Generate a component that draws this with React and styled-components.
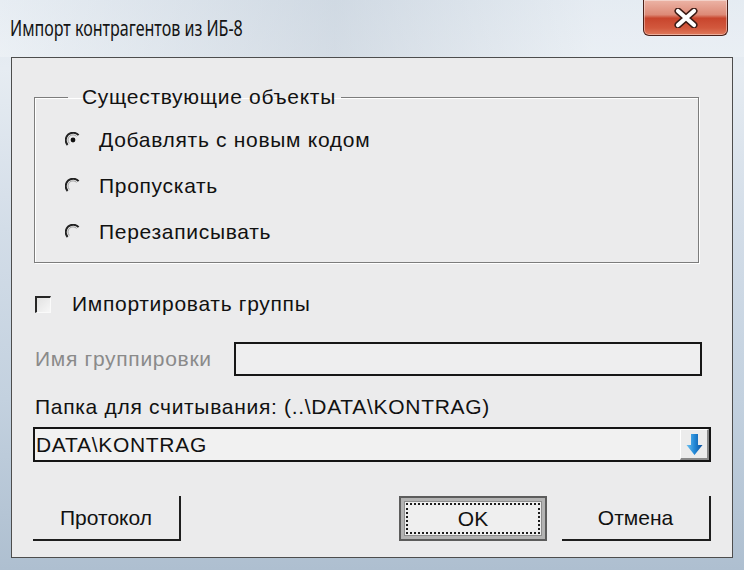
import React from 'react';
import styled, { createGlobalStyle } from 'styled-components';

const GlobalStyle = createGlobalStyle`
  html, body {
    margin: 0;
    padding: 0;
    background: #c5d3e1;
  }
  body {
    width: 744px;
    height: 570px;
    overflow: hidden;
  }
`;

const Window = styled.div`
  width: 744px;
  height: 570px;
  display: flex;
  flex-direction: column;
  background: linear-gradient(180deg, #dfe7ef 0%, #e6ecf2 12%, #d3dde8 40%, #c3d1df 70%, #aebfd0 100%);
  font-family: "Liberation Sans", Arial, sans-serif;
  color: #111;
`;

const TitleBar = styled.div`
  height: 57px;
  flex: none;
  display: flex;
  align-items: flex-start;
  justify-content: space-between;
  padding: 0 16px 0 10px;
  box-sizing: border-box;
  background: linear-gradient(90deg, rgba(255, 255, 255, 0.25) 0%, rgba(180, 192, 205, 0.35) 45%, rgba(255, 255, 255, 0.2) 80%);
`;

const Title = styled.div`
  margin-top: 12px;
  font-family: "Noto Sans", "Open Sans", sans-serif;
  font-size: 22px;
  line-height: 30px;
  color: #141414;
  transform: scaleX(0.73);
  transform-origin: left center;
  white-space: nowrap;
`;

const CloseButton = styled.div`
  width: 85px;
  height: 36px;
  box-sizing: border-box;
  border: 1px solid #4b2019;
  border-top: none;
  border-radius: 0 0 6px 6px;
  background: linear-gradient(180deg, #ecb4a6 0%, #dd8a77 42%, #c8452d 52%, #d2583d 80%, #e07a5c 100%);
  box-shadow: inset 0 0 0 1px rgba(255, 255, 255, 0.4);
  display: flex;
  align-items: center;
  justify-content: center;
`;

const Client = styled.div`
  flex: 1;
  margin: 0 11px;
  box-sizing: border-box;
  border: 1px solid #4d4d4d;
  background: #ebebec;
  padding: 27px 21px 0 21px;
  display: flex;
  flex-direction: column;
  font-size: 21px;
  letter-spacing: 0.7px;
`;

const BottomFrame = styled.div`
  height: 12px;
  flex: none;
`;

const GroupBox = styled.fieldset`
  margin: 0 12px 0 1px;
  padding: 0 0 7px 0;
  min-width: 0;
  border: 1px solid #7c7c7c;
  box-shadow: inset 1px 1px 0 #fff, 1px 1px 0 #fff;
`;

const Legend = styled.legend`
  margin-left: 33px;
  padding: 0 5px 0 14px;
  line-height: 24px;
`;

const RadioList = styled.div`
  padding: 8px 0 0 30px;
  display: flex;
  flex-direction: column;
`;

const RadioRow = styled.label`
  height: 46px;
  display: flex;
  align-items: center;
  gap: 18px;
`;

const CheckRow = styled.label`
  margin-top: 29px;
  height: 24px;
  padding-left: 2px;
  display: flex;
  align-items: center;
  gap: 21px;
`;

const CheckBox = styled.span`
  width: 16px;
  height: 17px;
  box-sizing: border-box;
  border-top: 2px solid #262626;
  border-left: 2px solid #262626;
  border-right: 1px solid #fafafa;
  border-bottom: 1px solid #fafafa;
  background: linear-gradient(135deg, #e2e2e2, #f7f7f7);
`;

const NameRow = styled.div`
  margin: 26px 9px 0 0;
  padding-left: 2px;
  display: grid;
  grid-template-columns: 199px 1fr;
  align-items: center;
`;

const DimLabel = styled.span`
  color: #8a8a8a;
`;

const TextBox = styled.div`
  height: 34px;
  box-sizing: border-box;
  border: 2px solid #161616;
  background: #eeeeef;
`;

const FolderLabel = styled.div`
  margin-top: 19px;
  padding-left: 2px;
  line-height: 24px;
`;

const Combo = styled.div`
  margin-top: 8px;
  height: 35px;
  box-sizing: border-box;
  border: 2px solid #141414;
  background: #f1f1f1;
  display: flex;
  align-items: center;
  justify-content: space-between;
  padding-left: 1px;
`;

const DropButton = styled.span`
  align-self: stretch;
  width: 29px;
  box-sizing: border-box;
  border-top: 1px solid #fff;
  border-left: 1px solid #fff;
  border-right: 2px solid #8a8a8a;
  border-bottom: 2px solid #8a8a8a;
  background: #ececec;
  display: flex;
  align-items: center;
  justify-content: center;
`;

const ButtonRow = styled.div`
  margin-top: 34px;
  display: flex;
  gap: 15px;
`;

const FlatButton = styled.button`
  width: ${({ $w }) => $w || 148}px;
  height: 45px;
  box-sizing: border-box;
  margin-right: ${({ $push }) => ($push ? 'auto' : '0')};
  background: transparent;
  border-style: solid;
  border-width: 0 2px 2px 0;
  border-color: #1e1e1e;
  font: inherit;
  color: #111;
  padding: 0;
  outline: none;
`;

const DefaultButton = styled.button`
  width: 148px;
  height: 45px;
  box-sizing: border-box;
  background: #efefef;
  border: 2px solid #5c5c5c;
  box-shadow: inset 0 0 0 3px #b3b3b3, inset 0 0 0 4px #8d8d8d;
  outline: 2px dotted #1c1c1c;
  outline-offset: -9px;
  font: inherit;
  color: #111;
  padding: 0;
`;

const RadioMark = ({ checked }) => (
  <svg width="16" height="16" viewBox="0 0 16 16">
    <path d="M2.6 13 A6.6 6.6 0 0 1 13.6 3.2" fill="none" stroke="#222" strokeWidth="2" />
    <path d="M4.4 11.4 A4.6 4.6 0 0 1 11.6 4.4" fill="none" stroke="#a0a0a0" strokeWidth="1" />
    {checked && <circle cx="8" cy="8" r="2.4" fill="#111" />}
  </svg>
);

const CloseGlyph = () => (
  <svg width="26" height="20" viewBox="0 0 26 20">
    <path d="M5 3 L21 17 M21 3 L5 17" stroke="#3a1a14" strokeWidth="7" strokeLinecap="round" />
    <path d="M5 3 L21 17 M21 3 L5 17" stroke="#fff" strokeWidth="4.2" strokeLinecap="round" />
  </svg>
);

const DownArrow = () => (
  <svg width="17" height="23" viewBox="0 0 17 23">
    <defs>
      <linearGradient id="arrowBlue" x1="0" y1="0" x2="1" y2="0">
        <stop offset="0" stopColor="#6cc2f2" />
        <stop offset="0.5" stopColor="#2388d6" />
        <stop offset="1" stopColor="#0b4f9c" />
      </linearGradient>
    </defs>
    <path d="M5 1 H12 V12 H16.5 L8.5 22 L0.5 12 H5 Z" fill="url(#arrowBlue)" />
  </svg>
);

const options = ['Добавлять с новым кодом', 'Пропускать', 'Перезаписывать'];

export default function App() {
  return (
    <Window>
      <GlobalStyle />
      <TitleBar>
        <Title>Импорт контрагентов из ИБ-8</Title>
        <CloseButton>
          <CloseGlyph />
        </CloseButton>
      </TitleBar>
      <Client>
        <GroupBox>
          <Legend>Существующие объекты</Legend>
          <RadioList>
            {options.map((text, i) => (
              <RadioRow key={text}>
                <RadioMark checked={i === 0} />
                {text}
              </RadioRow>
            ))}
          </RadioList>
        </GroupBox>
        <CheckRow>
          <CheckBox />
          Импортировать группы
        </CheckRow>
        <NameRow>
          <DimLabel>Имя группировки</DimLabel>
          <TextBox />
        </NameRow>
        <FolderLabel>Папка для считывания: (..\DATA\KONTRAG)</FolderLabel>
        <Combo>
          <span>DATA\KONTRAG</span>
          <DropButton>
            <DownArrow />
          </DropButton>
        </Combo>
        <ButtonRow>
          <FlatButton $push>Протокол</FlatButton>
          <DefaultButton>OK</DefaultButton>
          <FlatButton $w={149}>Отмена</FlatButton>
        </ButtonRow>
      </Client>
      <BottomFrame />
    </Window>
  );
}
